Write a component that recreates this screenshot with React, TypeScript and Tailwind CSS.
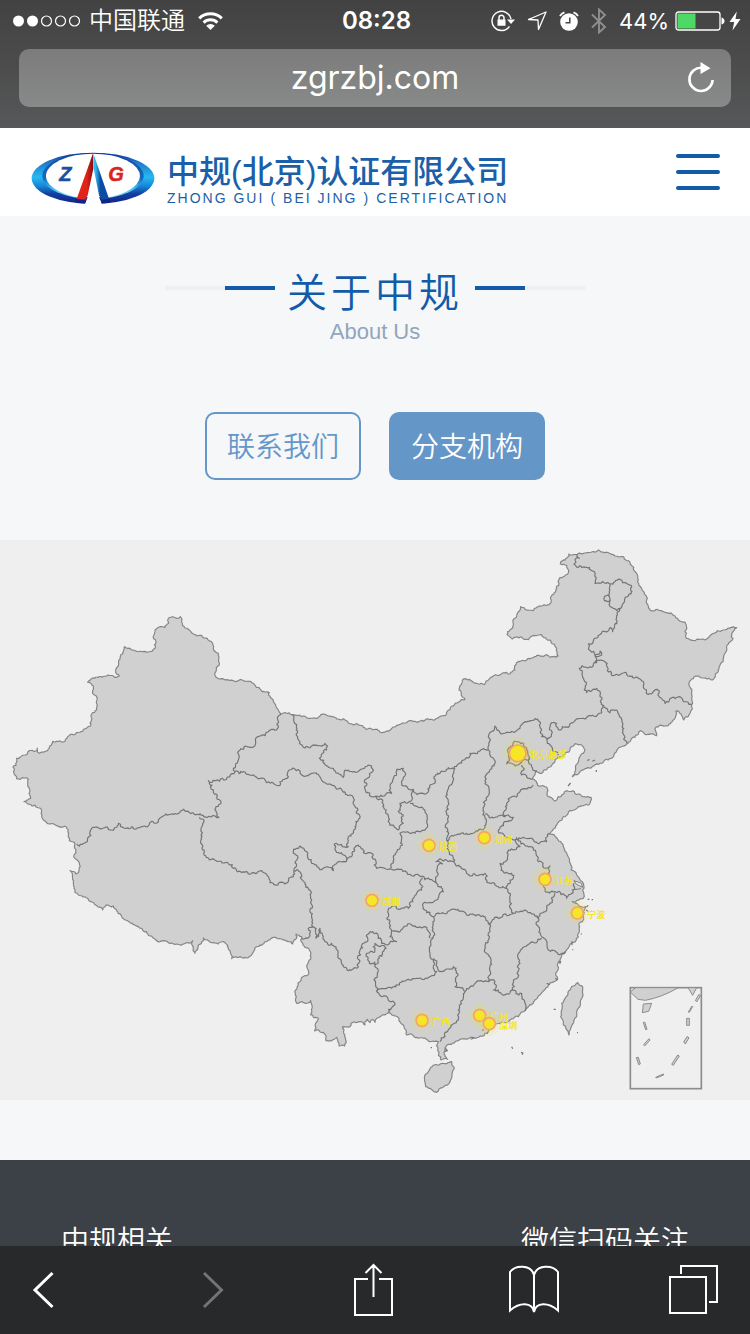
import React from "react";

const CJK = "font-['Liberation_Sans','Noto_Sans_CJK_SC',sans-serif]";
const SF = "font-['Inter','Noto_Sans_CJK_SC',sans-serif]";

/* ---------- map data: "x,y" pairs on a 2250 x 1680 canvas ---------- */

const MAINLAND =
  "38,682 48,676 50,655 75,645 88,632 104,634 112,624 118,640 143,632 158,604 190,606 203,590 272,558 275,522 290,510 292,495 283,465 280,438 263,427 270,421 328,406 350,412 358,408 347,393 362,345 374,320 400,330 445,336 465,325 462,285 470,266 495,262 506,250 506,234 530,235 541,230 548,257 565,268 580,282 605,286 622,295 634,305 640,325 655,340 654,378 644,400 652,414 700,422 745,424 795,456 808,458 820,485 843,522 875,524 920,533 1000,530 1030,536 1045,549 1075,555 1100,568 1125,568 1150,577 1190,556 1235,542 1305,539 1340,522 1360,498 1395,478 1377,450 1387,421 1415,423 1453,434 1487,404 1530,402 1545,390 1555,364 1585,355 1615,346 1675,348 1670,325 1650,300 1625,284 1603,286 1585,299 1565,291 1537,297 1521,283 1530,270 1562,200 1575,208 1600,212 1625,198 1653,188 1652,172 1675,122 1705,98 1700,76 1681,72 1687,62 1707,42 1735,40 1795,30 1825,38 1845,48 1870,50 1890,68 1908,98 1915,120 1925,145 1940,180 1950,210 1985,212 2020,226 2055,246 2055,275 2067,297 2115,300 2135,283 2170,270 2210,263 2195,280 2199,295 2180,318 2170,355 2155,390 2137,420 2097,408 2067,430 2075,460 2075,494 2071,518 2051,540 2043,522 2027,514 2023,538 1995,558 1967,562 1970,587 1935,583 1921,572 1905,592 1880,612 1850,632 1825,660 1785,674 1755,686 1737,700 1717,710 1727,688 1735,665 1755,630 1745,615 1725,611 1710,625 1692,644 1670,655 1655,676 1625,700 1609,692 1597,716 1615,738 1640,742 1645,770 1663,783 1675,770 1700,752 1735,762 1773,772 1767,795 1735,800 1700,826 1670,855 1650,882 1685,910 1700,940 1713,990 1730,1005 1747,1025 1750,1075 1717,1085 1735,1095 1757,1100 1750,1130 1737,1155 1735,1190 1715,1210 1695,1238 1673,1270 1673,1318 1645,1335 1615,1368 1575,1412 1555,1430 1515,1448 1480,1452 1465,1475 1425,1495 1375,1502 1340,1516 1335,1530 1343,1558 1323,1560 1313,1530 1315,1505 1285,1503 1255,1495 1220,1485 1205,1452 1187,1428 1165,1418 1125,1447 1118,1438 1110,1448 1102,1438 1095,1455 1080,1445 1062,1445 1050,1460 1028,1460 1034,1518 1017,1518 1010,1492 995,1503 978,1502 970,1477 944,1473 955,1435 932,1425 932,1382 890,1390 887,1350 900,1325 927,1300 928,1230 915,1222 905,1190 888,1182 878,1212 825,1192 765,1224 752,1248 695,1256 690,1232 675,1208 655,1212 610,1194 585,1240 578,1202 530,1212 490,1202 477,1206 450,1188 440,1175 415,1160 390,1148 340,1098 318,1095 308,1110 270,1084 235,1065 222,1045 218,1015 210,992 228,1002 238,990 238,970 222,945 225,912 208,902 198,860 170,857 130,840 125,810 105,795 72,785 92,775 85,718 50,716 38,682";

const BORDERS = [
  "843,522 832,535 835,562 805,575 780,588 752,622 722,626 715,660 705,695",
  "705,695 625,722 636,735 640,757 663,785 648,800 657,832 610,828",
  "612,830 560,814 490,828 475,846 420,862 372,864 355,850 335,870 275,865 262,905 230,912",
  "598,832 612,845 603,870 612,930 630,960 700,985 760,998 785,992 810,1028 835,1030 855,1032 880,1010 882,993",
  "882,993 905,1005 930,1050 938,1100 940,1160 925,1165 922,1195 905,1195",
  "882,993 890,960 880,935 900,918 920,935 935,970 970,985 1000,992 1015,965 1040,960 1030,945 1005,925 1003,912 1045,920 1045,890 1075,840 1078,825 1065,800 1050,765 1005,740 975,728 935,700 905,705 868,690 865,710 840,736 800,728 770,712 730,695 705,695",
  "1040,960 1058,935 1075,915 1090,938 1120,945 1130,985 1175,988",
  "875,524 893,575 893,590 915,624 975,610 980,630 958,655 1000,685 1030,712 1045,690 1080,690 1115,678 1118,695 1093,725 1095,748 1125,770 1150,768 1175,760 1178,720 1190,688 1210,685 1205,730 1240,748 1280,760 1290,735 1320,700 1345,683 1362,685 1390,660 1410,640 1465,630",
  "1125,768 1150,792 1165,845 1195,870 1210,850 1210,825 1195,815 1200,790 1228,785 1240,750",
  "1230,790 1278,820 1278,865 1245,880 1200,880 1200,925 1180,950 1175,985",
  "1365,685 1350,735 1345,780 1340,850 1340,900 1362,965",
  "1175,988 1265,1010 1310,1030 1312,985 1328,972 1308,965 1362,965",
  "1465,630 1485,670 1455,710 1468,760 1452,800 1455,862 1400,880 1340,902",
  "1465,630 1465,590 1485,558 1500,578 1560,565 1575,545 1605,535 1620,560 1625,590 1648,593 1655,548 1670,550 1682,570 1750,535 1805,518 1808,495",
  "1648,593 1642,610 1665,635 1672,655",
  "1808,495 1800,465 1790,445 1760,458 1752,420 1738,385 1775,382 1790,368 1785,345 1765,312 1815,275 1832,262 1838,275 1850,232 1862,205 1840,205 1828,170 1830,132 1785,130 1772,90 1745,82 1722,72 1738,55 1732,42",
  "1830,132 1860,118 1892,148 1870,190 1862,205",
  "1828,168 1812,175 1822,185 1832,182",
  "1785,345 1800,333 1805,345 1785,348",
  "1785,366 1815,365 1822,392 1850,403 1880,400 1925,422 1930,440 1955,462 1972,448 1995,490 2010,475 2040,470 2050,485 2075,494",
  "1808,495 1830,518 1850,510 1868,550 1880,610",
  "1525,650 1520,672 1555,675 1585,660 1580,625 1555,605 1525,625 1525,650",
  "1565,675 1565,705 1597,718",
  "1585,655 1595,680 1609,695",
  "1600,735 1560,755 1520,790 1515,828",
  "1455,822 1515,830 1540,832 1500,865 1497,880",
  "1497,880 1545,900 1570,892 1620,908 1640,905 1650,882",
  "1545,900 1560,920 1525,930 1515,965 1500,970 1510,995 1535,1000 1530,1030 1520,1045",
  "1548,892 1600,930 1615,965 1635,985 1650,978 1645,1000 1635,1050 1665,1055 1700,1075 1720,1050 1722,1030",
  "1362,965 1400,1000 1455,1000 1470,1030 1520,1045 1530,1080 1540,1120",
  "1665,1060 1640,1110 1615,1135",
  "1540,1120 1575,1110 1615,1135 1615,1160 1625,1190",
  "1540,1120 1465,1150 1455,1130 1400,1125 1355,1108 1300,1130",
  "1310,1030 1330,1055 1310,1080 1270,1090 1275,1110 1300,1130 1295,1195",
  "1268,1015 1265,1050 1240,1075 1225,1105 1175,1100 1160,1135 1170,1165 1200,1175 1235,1155 1275,1160 1290,1195",
  "940,1160 948,1195 960,1165 975,1205 995,1210 1025,1270 1045,1292 1075,1280 1080,1230 1110,1175 1125,1180",
  "1125,1180 1145,1210 1190,1205 1170,1190 1175,1172",
  "1125,1232 1100,1240 1108,1270 1130,1272 1158,1225 1125,1210 1125,1232",
  "1125,1265 1132,1300 1122,1320 1130,1355",
  "1130,1355 1175,1345 1220,1320 1290,1310 1310,1295 1300,1260 1290,1240 1300,1195",
  "1130,1355 1170,1385 1185,1390 1165,1418",
  "1300,1255 1320,1295 1360,1280 1370,1310 1365,1340 1395,1355",
  "1465,1150 1470,1175 1455,1220 1470,1280 1465,1325",
  "1395,1355 1425,1330 1465,1325 1485,1325 1480,1350 1530,1362",
  "1530,1360 1560,1270 1560,1235 1590,1210 1625,1195",
  "1625,1190 1645,1230 1695,1235",
  "1535,1350 1565,1360 1575,1412",
  "1395,1355 1375,1410 1375,1440 1345,1470 1320,1505",
];

const ISLANDS = [
  "1300,1575 1355,1565 1363,1585 1347,1630 1310,1657 1277,1640 1275,1605 1300,1575",
  "1733,1327 1748,1340 1742,1380 1730,1430 1712,1465 1707,1485 1690,1455 1682,1430 1685,1390 1715,1340 1733,1327",
];

/* Roughens a polyline with a repeatable displacement of its midpoints. */
function rough(points: string, jag = 1): string {
  const pts = points.split(" ").map((p) => p.split(",").map(Number));
  const out: string[] = [`M${pts[0][0]} ${pts[0][1]}`];
  const noise = (a: number, b: number) => {
    const n = Math.sin(a * 12.9898 + b * 78.233) * 43758.5453;
    return (n - Math.floor(n) - 0.5) * 2;
  };
  const split = (a: number[], b: number[], depth: number) => {
    const dx = b[0] - a[0];
    const dy = b[1] - a[1];
    const len = Math.hypot(dx, dy);
    if (len > 7 && depth < 4) {
      const k = (noise(a[0] + b[0], a[1] + b[1]) * Math.min(len * 0.34, 7) * jag) / len;
      const mid = [(a[0] + b[0]) / 2 - dy * k, (a[1] + b[1]) / 2 + dx * k];
      split(a, mid, depth + 1);
      split(mid, b, depth + 1);
    } else {
      out.push(`L${b[0].toFixed(1)} ${b[1].toFixed(1)}`);
    }
  };
  for (let i = 1; i < pts.length; i++) split(pts[i - 1], pts[i], 0);
  return out.join("");
}

const CITIES = [
  { name: "北京总部", x: 1553, y: 640, r: 25 },
  { name: "陕西", x: 1287, y: 916, r: 18 },
  { name: "郑州", x: 1453, y: 893, r: 18 },
  { name: "江苏", x: 1635, y: 1018, r: 18 },
  { name: "宁波", x: 1732, y: 1119, r: 18 },
  { name: "成都", x: 1116, y: 1081, r: 18 },
  { name: "广西", x: 1266, y: 1441, r: 18 },
  { name: "广州", x: 1439, y: 1426, r: 18 },
  { name: "深圳", x: 1468, y: 1451, r: 18 },
];

const DASHES =
  "M1930 1392L1955 1390L1946 1414L1927 1418Z M1930 1447L1934 1446L1941 1468L1937 1469Z M1931 1514L1947 1496L1950 1500L1934 1518Z M1909 1553L1915 1552L1921 1572L1916 1574Z M1967 1612L1990 1602L1991 1605L1969 1614Z M2015 1573L2033 1545L2038 1548L2020 1576Z M2051 1506L2061 1490L2067 1493L2056 1512Z M2060 1435H2068V1456H2060Z M2065 1416L2076 1398L2078 1400L2068 1417Z M2086 1382L2096 1364L2102 1366L2091 1385Z";

const SPECKS =
  "M1762 662l6-4 M1777 664l8-4 M1789 690v6 M1704 738l8-9 M1661 1408h6 M1731 1478h3 M1535 1520l3 6 M1563 1537l6 2l-3 5 M1763 1078h5 M1775 1079h4 M1765 1096l-6 5 M1758 1110l6 4 M1716 1204v12 M1718 1228v3 M1742 1182h4 M1676 1266l6-2l-3 8 M1666 1315l6 4 M1640 1330l10 4 M1447 1472l4-4 M1460 1482l5-6 M1412 1498l10-4 M1336 1524l6 8l-8 2 M1292 1523h4";

function BranchMap() {
  return (
    <svg viewBox="0 0 2250 1680" className="block w-full bg-[#efefef]" role="img" aria-label="分支机构">
      <defs>
        <radialGradient id="glow">
          <stop offset="0.4" stopColor="#f3e624" stopOpacity="0.4" />
          <stop offset="1" stopColor="#f3e624" stopOpacity="0" />
        </radialGradient>
      </defs>
      <g fill="#d0d0d0" stroke="#858585" strokeWidth="3.5" strokeLinejoin="round">
        <path d={rough(MAINLAND, 0.7)} />
        {ISLANDS.map((d) => (
          <path key={d} d={rough(d, 0.5)} />
        ))}
      </g>
      <g fill="none" stroke="#747474" strokeWidth="3.5" strokeLinejoin="round">
        {BORDERS.map((d) => (
          <path key={d} d={rough(d)} />
        ))}
        <path d={SPECKS} />
      </g>
      <path d="M1722 1022l22 8l4 12l-20-10z M1715 1050l28 -4" fill="#efefef" stroke="#7d7d7d" strokeWidth="3" />
      <g stroke="#8c8c8c" strokeWidth="3" fill="#d0d0d0">
        <rect x="1891" y="1343" width="213" height="303" fill="none" strokeWidth="5" />
        <path d="M1891 1356L1907 1343H2035Q1985 1372 1936 1381L1914 1378Z" />
        <path d="M2064 1343H2090L2078 1366Z" />
        <path d={DASHES} />
      </g>
      {CITIES.map((c) => (
        <g key={c.name}>
          <circle cx={c.x} cy={c.y} r={c.r * 1.7} fill="url(#glow)" />
          <circle cx={c.x} cy={c.y} r={c.r * 1.85} fill="none" stroke="#e6dc50" strokeOpacity="0.4" strokeWidth="2" />
          <circle cx={c.x} cy={c.y} r={c.r * 1.45} fill="none" stroke="#e6dc50" strokeOpacity="0.4" strokeWidth="2" />
          <circle cx={c.x} cy={c.y} r={c.r} fill="#f5e626" stroke="#f7a070" strokeWidth="5" />
          <text
            x={c.x + c.r + 12}
            y={c.y + 15}
            fontSize="27"
            fontWeight="700"
            fill="#f3e624"
            className="font-['Noto_Sans_CJK_SC',sans-serif]"
          >
            {c.name}
          </text>
        </g>
      ))}
    </svg>
  );
}

function StatusBar() {
  return (
    <div className="grid h-[41px] grid-cols-[1fr_auto_1fr] items-center pr-[9px] pl-3 text-2xl leading-10">
      <div className="flex items-center gap-2">
        <svg width="69" height="14" viewBox="0 0 69 14" fill="none" stroke="#fff" strokeWidth="1.2">
          <circle cx="6.5" cy="7" r="5.5" fill="#fff" stroke="none" />
          <circle cx="20.5" cy="7" r="5.5" fill="#fff" stroke="none" />
          <circle cx="34.5" cy="7" r="5" />
          <circle cx="48.5" cy="7" r="5" />
          <circle cx="62.5" cy="7" r="5" />
        </svg>
        <span className="font-[350]">中国联通</span>
        <svg width="32" height="20" viewBox="0 0 32 20">
          <g fill="none" stroke="#fff" strokeWidth="3">
            <path d="M6.2 7.4a16.2 16.2 0 0 1 22.6 0" />
            <path d="M10.6 11.6a10 10 0 0 1 13.8 0" />
          </g>
          <path d="M17.5 19l-4.3-4.2a6.2 6.2 0 0 1 8.6 0z" fill="#fff" />
        </svg>
      </div>
      <span className="font-semibold">08:28</span>
      <div className="flex items-center justify-end">
        <svg width="24" height="22" viewBox="0 0 24 22">
          <path d="M18.5 16.4A9.6 9.6 0 1 1 20 9" fill="none" stroke="#fff" strokeWidth="1.4" />
          <path d="M16 9.4h8l-4 4.6z M6.5 9.6h8v6.2h-8z" fill="#fff" />
          <path d="M8 10V7.8a2.500 2.500 0 0 1 5 0V10" fill="none" stroke="#fff" strokeWidth="1.5" />
        </svg>
        <svg width="20" height="20" viewBox="0 0 20 20" className="ml-3">
          <path d="M1.500 8.500L19 1L11.500 18.500L11 9Z" fill="none" stroke="#fff" strokeWidth="1.3" strokeLinejoin="round" />
        </svg>
        <svg width="20" height="20" viewBox="0 0 20 20" className="ml-3">
          <circle cx="10" cy="11" r="8.8" fill="#fff" />
          <path d="M10.8 6.5v5.2H6.5" fill="none" stroke="#444645" strokeWidth="1.5" />
          <path d="M1 5A8 8 0 0 1 5.5 1.3M19 5A8 8 0 0 0 14.5 1.3" fill="none" stroke="#fff" strokeWidth="1.8" />
        </svg>
        <svg width="16" height="26" viewBox="0 0 16 26" className="ml-3">
          <path d="M1 6.5L14 19L8 24.5V1.5L14 7L1 19.5" fill="none" stroke="#8d8e8e" strokeWidth="1.9" />
        </svg>
        <span className="ml-3 text-[22px]">44%</span>
        <svg width="50" height="20" viewBox="0 0 50 20" className="ml-[6px]">
          <rect x="1" y="1" width="44" height="18" rx="2.5" fill="none" stroke="#fff" strokeWidth="1.3" />
          <rect x="2.5" y="2.5" width="18" height="15" fill="#4cd964" />
          <path d="M46.500 6.500q3 1 3 3.500t-3 3.500z" fill="#fff" />
        </svg>
        <svg width="12" height="20" viewBox="0 0 12 20" className="ml-1">
          <path d="M7.8 0.5L0.5 11H5.2L3.5 19.5L11.5 8H6.5Z" fill="#fff" />
        </svg>
      </div>
    </div>
  );
}

function Emblem() {
  return (
    <svg width="124" height="52" viewBox="95 70 370 156" className="shrink-0">
      <defs>
        <linearGradient id="ring" x1="0" y1="0" x2="0" y2="1">
          <stop offset="0" stopColor="#12389a" />
          <stop offset="0.2" stopColor="#1e7ccb" />
          <stop offset="0.48" stopColor="#27b9f2" />
          <stop offset="0.66" stopColor="#1583d6" />
          <stop offset="0.8" stopColor="#14409f" />
          <stop offset="1" stopColor="#11248a" />
        </linearGradient>
        <linearGradient id="shine" x1="0" y1="0" x2="0" y2="1">
          <stop offset="0" stopColor="#12389a" />
          <stop offset="0.25" stopColor="#1a56ae" />
          <stop offset="0.55" stopColor="#0f6cc0" />
          <stop offset="0.8" stopColor="#4fc4f5" />
          <stop offset="1" stopColor="#9be2fa" />
        </linearGradient>
        <linearGradient id="redLeg" x1="0" y1="0" x2="1" y2="0">
          <stop offset="0.6" stopColor="#e2231a" />
          <stop offset="0.95" stopColor="#8e1010" />
        </linearGradient>
        <linearGradient id="blueLeg" x1="0" y1="0" x2="1" y2="0">
          <stop offset="0.15" stopColor="#35b6ee" />
          <stop offset="0.45" stopColor="#0c4da2" />
        </linearGradient>
      </defs>
      <ellipse cx="280" cy="149" rx="184" ry="77" fill="url(#ring)" />
      <ellipse cx="280" cy="142" rx="152" ry="69" fill="url(#shine)" />
      <ellipse cx="280" cy="142" rx="141" ry="67" fill="#fff" />
      <path d="M279 100L256 226H306L284 100Z" fill="#fff" />
      <path d="M230 210L264 205L257 224L228 222Z M330 210L298 205L306 224L332 222Z" fill="#11248a" />
      <path d="M280 74L231 211L257 213L264 200L281 120Z" fill="url(#redLeg)" />
      <path d="M281 74L328 210L306 213L298 200L282 120Z" fill="url(#blueLeg)" />
      <g fontSize="60" fontWeight="700" fontStyle="italic" className="font-['Liberation_Sans',sans-serif]">
        <text x="179" y="158" fill="#1c4ea2" stroke="#1c4ea2" strokeWidth="1.5">Z</text>
        <text x="326" y="158" fill="#d8261c" stroke="#d8261c" strokeWidth="1.5">G</text>
      </g>
    </svg>
  );
}

function SectionRule({ flip }: { flip?: boolean }) {
  return (
    <span className={`mb-[10px] flex h-1 w-[110px] ${flip ? "flex-row-reverse" : ""}`}>
      <span className="h-1 flex-1 bg-[#edeff4]" />
      <span className="h-1 w-[50px] bg-[#125ba8]" />
    </span>
  );
}

const toolButton = "flex h-14 w-14 items-center justify-center";
const pillButton = "h-[68px] w-[156px] rounded-[10px] border-2 border-[#6596c8] pt-1";

export default function App() {
  return (
    <div className={`flex h-screen flex-col overflow-hidden bg-[#f5f7f9] ${CJK}`}>
      <header className={`h-32 shrink-0 bg-gradient-to-b from-[#424242] via-[#4b4c4b] to-[#57585a] text-white ${SF}`}>
        <StatusBar />
        <div className="relative mx-[19px] mt-2 flex h-[58px] items-center rounded-[10px] bg-gradient-to-b from-[#7b7c7b] to-[#888989]">
          <input
            type="text"
            aria-label="地址"
            defaultValue="zgrzbj.com"
            className="w-full bg-transparent text-center text-[32px] leading-[58px] text-white outline-none"
          />
          <button type="button" aria-label="刷新" className="absolute right-4">
            <svg width="28" height="32" viewBox="0 0 28 32" className="block">
              <path d="M15 5.8A11.6 11.6 0 1 0 25.6 18" fill="none" stroke="#fff" strokeWidth="2.6" />
              <path d="M13.5 0L23.5 6.3L13.5 12Z" fill="#fff" />
            </svg>
          </button>
        </div>
      </header>

      <div className="min-h-0 flex-1 overflow-y-auto [scrollbar-width:none]">
        <div className="flex h-[88px] items-center justify-between bg-white pr-[30px] pl-[31px]">
          <a href="#home" className="flex items-center gap-3 pt-3 text-[#1c5fa9]">
            <Emblem />
            <span className="flex flex-col">
              <span className="pt-1 text-[32px] leading-9 font-medium whitespace-nowrap">中规(北京)认证有限公司</span>
              <span className="flex justify-between text-sm leading-4 tracking-[2px] whitespace-nowrap">
                <span>ZHONG GUI</span>
                <span>(</span>
                <span>BEI JING</span>
                <span>)</span>
                <span>CERTIFICATION</span>
              </span>
            </span>
          </a>
          <button type="button" aria-label="菜单" className="flex w-11 flex-col gap-3">
            <span className="h-1 w-full rounded-full bg-[#125ba8]" />
            <span className="h-1 w-full rounded-full bg-[#125ba8]" />
            <span className="h-1 w-full rounded-full bg-[#125ba8]" />
          </button>
        </div>

        <section className="flex flex-col items-center pt-[52px]">
          <div className="flex items-center">
            <SectionRule />
            <h1 className="w-[200px] text-center text-[40px] leading-[50px] font-[350] tracking-widest text-[#125ba8]">
              关于中规
            </h1>
            <SectionRule flip />
          </div>
          <p className="text-[22px] leading-7 text-[#93a5ba]">About Us</p>
          <div className="flex gap-7 pt-[66px] pb-[60px] text-[28px] font-[350]">
            <button type="button" className={`${pillButton} text-[#6596c8]`}>
              联系我们
            </button>
            <button type="button" className={`${pillButton} bg-[#6596c8] text-white`}>
              分支机构
            </button>
          </div>
          <BranchMap />
        </section>

        <footer className="mt-[60px] flex justify-between bg-[#3c4047] px-[61px] py-[62px] text-[28px] leading-10 font-[350] text-white">
          <h2>中规相关</h2>
          <h2>微信扫码关注</h2>
        </footer>
      </div>

      <nav className="flex h-[88px] shrink-0 items-center justify-between bg-[#28292b] pr-7 pl-4 text-white">
        <button type="button" aria-label="后退" className={toolButton}>
          <svg width="24" height="40" viewBox="0 0 24 40" fill="none" stroke="currentColor" strokeWidth="3">
            <path d="M20.5 3L3 20L20.5 37" />
          </svg>
        </button>
        <button type="button" aria-label="前进" className={`${toolButton} ml-2 text-[#737475]`}>
          <svg width="24" height="40" viewBox="0 0 24 40" fill="none" stroke="currentColor" strokeWidth="3">
            <path d="M3 3L20.5 20L3 37" />
          </svg>
        </button>
        <button type="button" aria-label="分享" className={toolButton}>
          <svg width="40" height="54" viewBox="0 0 40 54" fill="none" stroke="currentColor" strokeWidth="2">
            <path d="M15 16H2V52H39V16H26M20.5 34V2M12.5 10L20.5 2L28.5 10" />
          </svg>
        </button>
        <button type="button" aria-label="书签" className={toolButton}>
          <svg width="52" height="50" viewBox="0 0 52 50" fill="none" stroke="currentColor" strokeWidth="2">
            <path d="M26 47V10C23 -1 7 0 2 7V45.500C12 37 24 37 26 47C28 37 40 37 50 45.500V7C45 0 29 -1 26 10" />
          </svg>
        </button>
        <button type="button" aria-label="标签页" className={toolButton}>
          <svg width="52" height="50" viewBox="0 0 52 50" fill="none" stroke="currentColor" strokeWidth="2">
            <path d="M2 12H38V48H2ZM13 9V1H49V37H41" />
          </svg>
        </button>
      </nav>
    </div>
  );
}
